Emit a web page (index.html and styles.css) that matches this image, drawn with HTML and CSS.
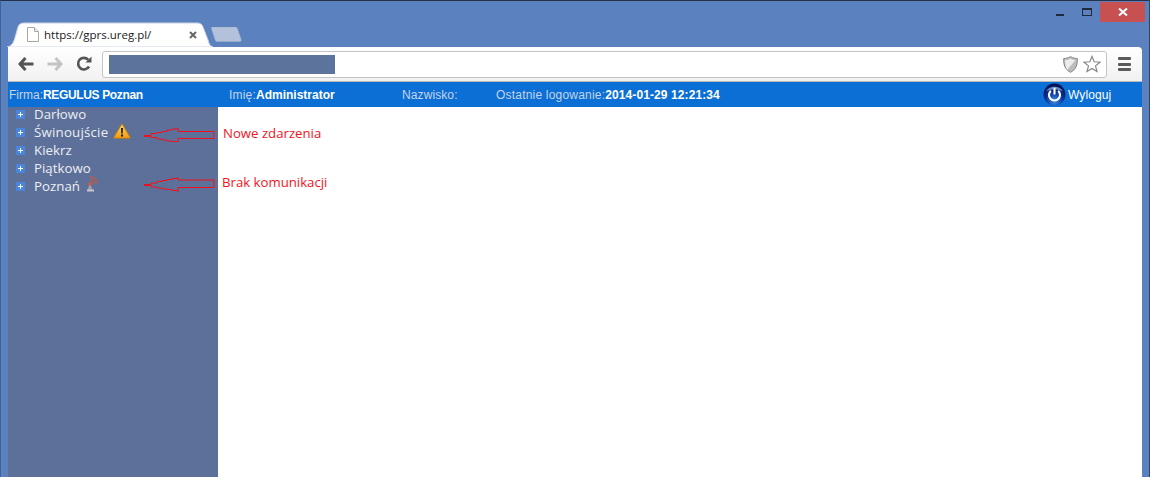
FILE: index.html
```html
<!DOCTYPE html>
<html lang="pl">
<head>
<meta charset="utf-8">
<title>gprs.ureg.pl</title>
<link rel="stylesheet" href="styles.css">
</head>
<body>
<div class="window">
  <div class="titlebar">
    <div class="tabs">
      <div class="tab">
        <svg class="tab-shape" width="206" height="25" viewBox="0 0 206 25"><path d="M0 25 C6 24 7 19 9 12 L11 5 C12 2 14 1 17 1 L190 1 C193 1 195 2 196 5 L201 18 C202 22 203 24 206 25 Z" fill="#fff" stroke="#c9d3e4" stroke-width="1"/></svg>
        <svg class="page-icon" width="12" height="15" viewBox="0 0 12 15"><path d="M.5.5H7.500L11.500 4.500V14.500H.5Z" fill="#fff" stroke="#a8a8a8"/><path d="M7.500.5V4.500H11.500" fill="#eee" stroke="#a8a8a8"/></svg>
        <span class="tab-title">https://gprs.ureg.pl/</span>
        <svg class="tab-close" width="8" height="8" viewBox="0 0 8 8"><path d="M1 1L7 7M7 1L1 7" stroke="#666" stroke-width="2"/></svg>
      </div>
      <svg class="new-tab" width="31" height="15" viewBox="0 0 31 15"><path d="M1 0H24C25.500 0 26 .5 26.500 2L30 12C30.500 14 30 14.500 28 14.500H7C5 14.500 4.500 14 4 12.500L.5 1.500C.3.5.5 0 1 0Z" fill="#b3c2da" stroke="#9eb0cf" stroke-width=".6"/></svg>
    </div>
    <div class="controls">
      <span class="ctl ctl-min"></span>
      <span class="ctl ctl-max"></span>
      <span class="ctl-close"><svg width="10" height="10" viewBox="0 0 10 10"><path d="M1 1.500L9 8.500M9 1.500L1 8.500" stroke="#fff" stroke-width="2"/></svg></span>
    </div>
  </div>

  <div class="toolbar">
    <svg class="nav" width="16" height="14" viewBox="0 0 16 14"><path d="M7.500 1L2 7L7.500 13M2.500 7H15.500" fill="none" stroke="#555" stroke-width="3"/></svg>
    <svg class="nav" width="16" height="14" viewBox="0 0 16 14"><path d="M8.500 1L14 7L8.500 13M13.500 7H.5" fill="none" stroke="#c4c4c4" stroke-width="3"/></svg>
    <svg class="nav" width="16" height="16" viewBox="0 0 16 16"><path d="M13 10.500A5.800 5.800 0 1 1 12.300 3.800" fill="none" stroke="#555" stroke-width="2.600"/><path d="M9.500 6.500H15.500V.5Z" fill="#555"/></svg>
    <div class="omnibox">
      <div class="url-mask"></div>
      <svg class="shield" width="15" height="17" viewBox="0 0 15 17"><path d="M7.500.7C10 2 12 2.500 14.300 2.500C14.500 9 13 13.500 7.500 16.300C2 13.500 .5 9 .7 2.500C3 2.500 5 2 7.500.7Z" fill="#bdbdbd" stroke="#858585"/><path d="M12.500 4L4 14C2.500 11 2 7 2.200 4C4 4 6 3.500 7.500 2.500C9 3.500 11 4 12.500 4Z" fill="#ececec"/></svg>
      <svg class="star" width="18" height="18" viewBox="0 0 19 18"><path d="M9.500 1L11.800 6.700L18 7.100L13.200 11L14.800 17L9.500 13.700L4.200 17L5.800 11L1 7.100L7.200 6.700Z" fill="#fff" stroke="#858585" stroke-width="1.200"/></svg>
    </div>
    <div class="menu-icon"><span></span><span></span><span></span></div>
  </div>

  <header class="app-header">
    <div class="hd hd-firma">Firma:<b>REGULUS Poznan</b></div>
    <div class="hd hd-imie">Imię:<b>Administrator</b></div>
    <div class="hd hd-nazwisko">Nazwisko:</div>
    <div class="hd hd-login">Ostatnie logowanie:<b>2014-01-29 12:21:34</b></div>
    <div class="logout">
      <svg width="23" height="23" viewBox="0 0 22 22"><defs><radialGradient id="pw" cx=".5" cy=".8" r=".75"><stop offset="0" stop-color="#3f8fe8"/><stop offset=".55" stop-color="#0a2f96"/><stop offset="1" stop-color="#04124f"/></radialGradient></defs><circle cx="11" cy="11" r="10.500" fill="url(#pw)"/><path d="M3 8A9 8 0 0 1 19 8C15 5.500 7 5.500 3 8Z" fill="#8fb0e6" opacity=".75"/><path d="M7.500 7.500A5.300 5.300 0 1 0 14.500 7.500" fill="none" stroke="#fff" stroke-width="2"/><path d="M11 4.500V11" stroke="#fff" stroke-width="2"/></svg>
      <span>Wyloguj</span>
    </div>
  </header>

  <div class="main">
    <nav class="sidebar">
      <div class="row"><span class="plus"></span><span class="name">Darłowo</span></div>
      <div class="row"><span class="plus"></span><span class="name name-wide">Świnoujście</span>
        <svg class="warn" width="18" height="16" viewBox="0 0 18 16"><defs><linearGradient id="wg" x1="0" y1="0" x2="0" y2="1"><stop offset="0" stop-color="#ffd75e"/><stop offset="1" stop-color="#f09a10"/></linearGradient></defs><path d="M9 .8L17 14C17.300 14.800 17 15.300 16 15.300H2C1 15.300 .7 14.800 1 14Z" fill="url(#wg)" stroke="#b9780f" stroke-width=".8"/><path d="M8 5H10L9.700 10.500H8.300Z" fill="#1a1a1a"/><rect x="8" y="11.500" width="2" height="2" fill="#1a1a1a"/></svg>
      </div>
      <div class="row"><span class="plus"></span><span class="name">Kiekrz</span></div>
      <div class="row"><span class="plus"></span><span class="name">Piątkowo</span></div>
      <div class="row"><span class="plus"></span><span class="name">Poznań</span>
        <svg class="antenna" width="13" height="17" viewBox="0 0 13 17"><path d="M4.500 9L2.500 15H7.500L5.500 9Z" fill="#9a9ea9"/><path d="M2 15.500H9" stroke="#c4c7ce" stroke-width="2"/><circle cx="5" cy="9" r="1.800" fill="#e0563a"/><path d="M5.500 5.500A3 3 0 0 1 8.500 8.500M5.500 3.500A5 5 0 0 1 10.500 8.500M5.500 1.500A7 7 0 0 1 12.500 8.500" fill="none" stroke="#e0502c" stroke-width=".9"/></svg>
      </div>
    </nav>
    <div class="content"></div>
    <svg class="arrows" width="76" height="68" viewBox="0 0 76 68"><path d="M1 8.500H8V6.500H14V5.500H19V4.500H24V3H29V2H35V1.500V4.500H71V11.500H35V15V14.500H29V14H24V13H19V12H14V10.500H8V9.500H1" fill="none" stroke="#f0101e"/><path d="M1 57.500H8V56H14V54.500H19V53.500H24V52.500H29V51.500H35V50.500V53H71V60.500H35V64.500V63.500H29V62.500H24V62H19V61H14V60H8V58.500H1" fill="none" stroke="#f0101e"/></svg>
    <span class="note note-1">Nowe zdarzenia</span>
    <span class="note note-2">Brak komunikacji</span>
  </div>
</div>
</body>
</html>
```

FILE: styles.css
```css
* { box-sizing: border-box; }
html, body { margin: 0; height: 100%; overflow: hidden; }
body { background: #5b81bf; font-family: "Liberation Sans", Arial, sans-serif; }
.window { height: 477px; display: flex; flex-direction: column; border-top: 1px solid #26324a; border-left: 1px solid #41619a; border-right: 1px solid #2f4468; }

.titlebar { height: 46px; display: flex; justify-content: space-between; flex: none; }
.tabs { display: flex; align-items: flex-end; padding-left: 6px; }
.tab { position: relative; width: 206px; height: 25px; display: flex; align-items: center; padding: 0 16px 0 20px; font-family: "Open Sans", "Noto Sans", sans-serif; font-size: 11.5px; color: #1a1a1a; }
.tab-shape { position: absolute; left: 0; top: 0; }
.page-icon, .tab-title, .tab-close { position: relative; }
.page-icon { margin-right: 5px; flex: none; }
.tab-title { flex: 1; white-space: nowrap; }
.tab-close { flex: none; }
.new-tab { margin: 0 0 5px -2px; }

.controls { display: flex; align-items: flex-start; padding-right: 4px; }
.ctl { display: block; width: 10px; flex: none; }
.ctl-min { height: 2px; width: 8px; background: #1f2a3d; margin: 13px 18px 0 0; }
.ctl-max { height: 8px; width: 10px; border: 1px solid #1f2a3d; border-top-width: 2px; margin: 7px 8px 0 0; }
.ctl-close { width: 45px; height: 20px; margin-top: 1px; background: #c75050; display: flex; align-items: center; justify-content: center; }

.toolbar { height: 35px; margin: 0 7px; flex: none; display: flex; align-items: center; padding: 0 10px; background: linear-gradient(#fff, #f1f1f1); border-bottom: 1px solid #b9b9b9; border-radius: 0 4px 0 0; }
.nav { margin-right: 13px; flex: none; }
.nav:nth-child(3) { margin-right: 10px; }
.omnibox { width: 1005px; height: 27px; margin: 0 11px 0 0; flex: none; display: flex; align-items: center; padding: 0 5px 0 6px; background: #fff; border: 1px solid #c4c4c4; border-radius: 3px; }
.url-mask { width: 226px; height: 19px; background: #5c739c; margin-right: auto; }
.shield { margin-right: 5px; }
.menu-icon { width: 13px; display: flex; flex-direction: column; gap: 2.500px; }
.menu-icon span { display: block; height: 3px; background: #5a5a5a; border-radius: 1px; }

.app-header { height: 25px; margin: 0 7px; flex: none; position: relative; display: flex; align-items: center; background: #0c6fd6; color: #c5d4e6; font-size: 12px; }
.app-header b { color: #fff; }
.hd { flex: none; white-space: nowrap; }
.hd-firma { width: 221px; padding-left: 1px; }
.hd-firma b { letter-spacing: -.35px; }
.hd-imie { width: 173px; letter-spacing: .2px; }
.hd-imie b { letter-spacing: 0; }
.hd-nazwisko { width: 94px; letter-spacing: .1px; }
.hd-login { flex: 1; letter-spacing: .2px; }
.hd-login b { letter-spacing: .1px; }
.logout { display: flex; align-items: center; gap: 2px; width: 99px; color: #fff; flex: none; letter-spacing: .1px; }

.main { flex: 1; position: relative; margin: 0 7px; display: flex; min-height: 0; }
.sidebar { width: 210px; flex: none; background: #5c7099; font-family: "Open Sans", "Noto Sans", sans-serif; font-size: 13.300px; color: #eceef3; }
.row { height: 18px; padding: 0 0 4px 8px; display: flex; align-items: center; white-space: nowrap; }
.name-wide { letter-spacing: .2px; }
.plus { width: 9px; height: 9px; background: linear-gradient(#fff,#fff) center/5px 1px no-repeat, linear-gradient(#fff,#fff) center/1px 5px no-repeat, #4a86dc; margin-right: 9px; flex: none; }
.warn { margin-left: 5px; margin-bottom: 2px; }
.antenna { margin-left: 5px; margin-top: -5px; }
.content { flex: 1; background: #fff; }
.arrows { position: absolute; left: 135px; top: 20px; }
.note { position: absolute; font-family: "Open Sans", "Noto Sans", sans-serif; font-size: 13.200px; color: #f0141e; white-space: nowrap; line-height: 18px; }
.note-1 { left: 215px; top: 17px; }
.note-2 { left: 214px; top: 66px; }
```
